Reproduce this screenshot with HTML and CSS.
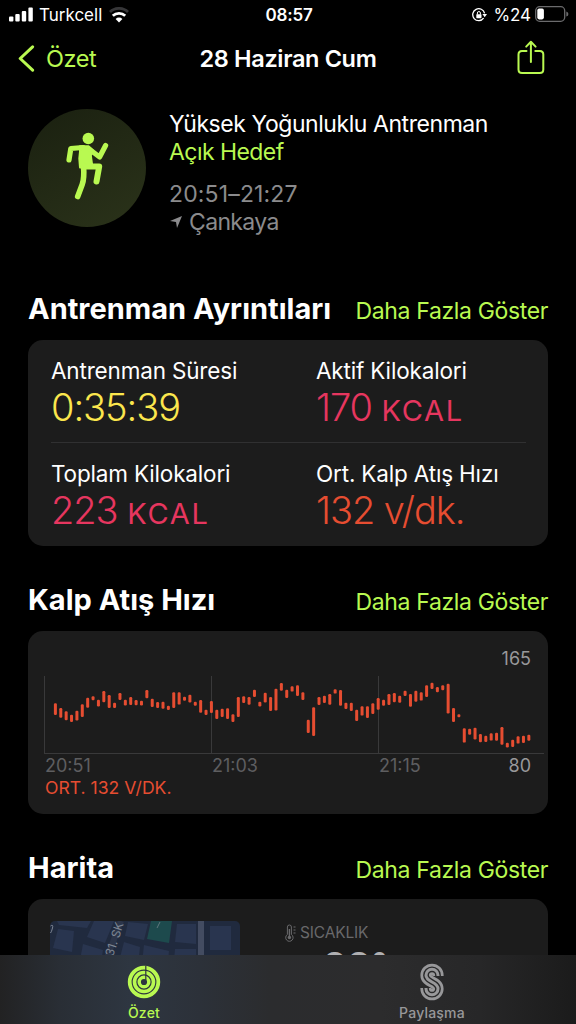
FILE: index.html
```
<!DOCTYPE html>
<html lang="tr">
<head>
    <meta charset="UTF-8">
    <meta name="viewport" content="width=device-width, initial-scale=1.0">
    <title>28 Haziran Cum</title>
    <link rel="stylesheet" href="styles.css">
</head>
<body>
<div class="status-bar">
    <div class="status-left">
        <svg class="signal" width="24" height="15" viewBox="0 0 24 15" fill="#fff">
            <rect x="0" y="9.5" width="4.4" height="5" rx="1"/>
            <rect x="6.3" y="7" width="4.4" height="7.5" rx="1"/>
            <rect x="12.8" y="4" width="4.4" height="10.5" rx="1"/>
            <rect x="19.4" y="0.5" width="4.4" height="14" rx="1"/>
        </svg>
        <span class="carrier">Turkcell</span>
        <svg width="20" height="16" viewBox="0 0 20 16" fill="none">
            <path d="M1 5 A13 13 0 0 1 19 5" stroke="#363638" stroke-width="2.8"/>
            <path d="M3.8 8.8 A8.9 8.9 0 0 1 16.2 8.8" stroke="#fff" stroke-width="2.8"/>
            <path d="M10 15.4 L6.6 11.9 A4.9 4.9 0 0 1 13.4 11.9 Z" fill="#fff"/>
        </svg>
    </div>
    <span class="clock">08:57</span>
    <div class="status-right">
        <svg width="15" height="14" viewBox="0 0 15 14" fill="none">
            <path d="M11.6 10.2 A6 6 0 1 1 12.6 5.4" stroke="#fff" stroke-width="1.3"/>
            <path d="M10.4 6 H15 L12.7 9.2 Z" fill="#fff"/>
            <rect x="4.3" y="6.2" width="5.2" height="4" rx="0.6" fill="#fff"/>
            <path d="M5.4 6.5 V5 A1.5 1.5 0 0 1 8.4 5 V6.5" stroke="#fff" stroke-width="1"/>
        </svg>
        <span class="percent">%24</span>
        <svg class="battery" width="34" height="16" viewBox="0 0 34 16" fill="none">
            <rect x="0.7" y="0.7" width="29" height="14.6" rx="4" stroke="#6b6b6d" stroke-width="1.3"/>
            <rect x="2.3" y="2.6" width="6.6" height="10.8" rx="1.8" fill="#fff"/>
            <path d="M31.3 5.4 Q33.4 6 33.4 8 Q33.4 10 31.3 10.6 Z" fill="#6b6b6d"/>
        </svg>
    </div>
</div>

<header class="nav">
    <a class="back">
        <svg width="17" height="27" viewBox="0 0 17 27" fill="none">
            <path d="M14.6 1.8 L2.2 13.5 L14.6 25.2" stroke="#b9f951" stroke-width="3" stroke-linecap="round" stroke-linejoin="round"/>
        </svg>
        <span>Özet</span>
    </a>
    <h1>28 Haziran Cum</h1>
    <svg class="share" width="28" height="36" viewBox="0 0 28 36" fill="none" stroke="#b9f951" stroke-width="2" stroke-linecap="round" stroke-linejoin="round">
        <path d="M9.5 11 H5 Q1.5 11 1.5 14.5 V29.5 Q1.5 33 5 33 H22.8 Q26.3 33 26.3 29.5 V14.5 Q26.3 11 22.8 11 H18.3"/>
        <path d="M13.9 22 V2 M9.2 6.6 L13.9 1.8 L18.6 6.6"/>
    </svg>
</header>

<section class="summary">
    <div class="badge">
        <svg width="118" height="118" viewBox="0 0 118 118" fill="none" stroke="#b9f951" stroke-linecap="round" stroke-linejoin="round">
            <circle cx="60.3" cy="29.5" r="5.8" fill="#b9f951" stroke="none"/>
            <path d="M52 37.3 H60.5 L65 41.5 L62.8 46.5 L64.5 58.5 H52 L51.3 49.5 L52 42.5 Z" fill="#b9f951" stroke-width="2"/>
            <path d="M55 38.5 L42.8 39.5 L41 51" stroke-width="5.2"/>
            <path d="M61 40 L71.6 48 L77.6 36.5" stroke-width="5.2"/>
            <path d="M57 57.5 H71.2 L68.5 72.5" stroke-width="6"/>
            <path d="M55.5 56.5 Q56.5 69.5 54.2 75.5 L49.7 87.5" stroke-width="5.6"/>
        </svg>
    </div>
    <div class="summary-text">
        <div class="workout-name">Yüksek Yoğunluklu Antrenman</div>
        <div class="goal">Açık Hedef</div>
        <div class="time">20:51–21:27</div>
        <div class="place">
            <svg width="14" height="14" viewBox="0 0 14 14"><path d="M13 1 L8 13 L7 7 L1 6 Z" fill="#8b8b8d"/></svg>
            <span>Çankaya</span>
        </div>
    </div>
</section>

<section class="block">
    <div class="block-head">
        <h2>Antrenman Ayrıntıları</h2>
        <a class="more">Daha Fazla Göster</a>
    </div>
    <div class="card stats">
        <div class="stat-row">
            <div class="stat">
                <div class="label">Antrenman Süresi</div>
                <div class="value yellow">0:35:39</div>
            </div>
            <div class="stat">
                <div class="label">Aktif Kilokalori</div>
                <div class="value pink">170 <span class="unit">KCAL</span></div>
            </div>
        </div>
        <div class="stat-row">
            <div class="stat">
                <div class="label">Toplam Kilokalori</div>
                <div class="value pink">223 <span class="unit">KCAL</span></div>
            </div>
            <div class="stat">
                <div class="label">Ort. Kalp Atış Hızı</div>
                <div class="value orange">132 v/dk.</div>
            </div>
        </div>
    </div>
</section>

<section class="block">
    <div class="block-head">
        <h2>Kalp Atış Hızı</h2>
        <a class="more">Daha Fazla Göster</a>
    </div>
    <div class="card heart">
        <div class="max">165</div>
        <svg class="chart" id="chart" width="500" height="80" viewBox="0 0 500 80">
            <path d="M0.5 1 V78.5 M167.5 1 V78.5 M334.5 1 V78.5 M0 78.5 H500" stroke="#39393a" fill="none"/>
        </svg>
        <div class="axis">
            <span>20:51</span>
            <span>21:03</span>
            <span>21:15</span>
            <span class="min">80</span>
        </div>
        <div class="average">ORT. 132 V/DK.</div>
    </div>
</section>

<section class="block">
    <div class="block-head">
        <h2>Harita</h2>
        <a class="more">Daha Fazla Göster</a>
    </div>
    <div class="card map-card">
        <svg class="map" width="190" height="103" viewBox="0 0 190 103">
            <rect width="190" height="103" fill="#202a3e"/>
            <g fill="#29354f">
                <path d="M7 0 H41 L37 7 L9 4 Z"/>
                <path d="M8 8 L24 10 L22 31 L3 27 Z"/>
                <path d="M44 0 H64 L55 22 L37 16 Z"/>
                <path d="M33 23 L53 29 L48 60 H26 Z"/>
                <path d="M78 1 L98 3 L94 19 L75 15 Z"/>
                <path d="M74 21 L90 26 L86 60 H64 Z"/>
                <path d="M94 24 L119 30 L116 60 H90 Z"/>
                <path d="M127 3 H146 V23 L125 21 Z"/>
                <path d="M125 28 H146 V60 H122 Z"/>
                <path d="M160 5 H181 V29 H160 Z"/>
                <path d="M160 35 H188 V60 H160 Z"/>
            </g>
            <path d="M101 0 H122 L119 22 L97 18 Z" fill="#1d4a4d"/>
            <path d="M107 7 L110 1" stroke="#60777c"/>
            <rect x="148" y="0" width="6" height="103" fill="#434c61"/>
            <path d="M71 0 L55 42" stroke="#2c3549" stroke-width="6"/>
            <text class="street" transform="translate(63 36) rotate(-72)">31. SK</text>
            <path d="M0.5 5 Q3.5 3 2.5 7 T0.5 12" stroke="#7d8593" fill="none"/>
        </svg>
        <div class="weather">
            <div class="weather-label">
                <svg width="12" height="18" viewBox="0 0 12 18" fill="none" stroke="#69696b">
                    <path d="M2.4 10.5 V3 A2 2 0 0 1 6.4 3 V10.5 A3.7 3.7 0 1 1 2.4 10.5 Z"/>
                    <path d="M4.4 5 V13" stroke-width="1.4"/>
                    <circle cx="4.4" cy="13.5" r="1.7" fill="#69696b" stroke="none"/>
                    <path d="M8.5 3 H10.5 M8.5 6 H10.5 M8.5 9 H10.5"/>
                </svg>
                <span>SICAKLIK</span>
            </div>
            <div class="degree">28°</div>
        </div>
    </div>
</section>

<nav class="tab-bar">
    <a class="tab active">
        <svg width="36" height="38" viewBox="0 0 36 38" fill="none" stroke="#b9f951">
            <circle cx="18" cy="19" r="14.3" stroke-width="3.8"/>
            <circle cx="18" cy="19" r="9.5" stroke-width="3.6"/>
            <circle cx="18" cy="19" r="4.8" stroke-width="3.4"/>
            <path d="M19.8 3 V17" stroke="#2d343e" stroke-width="1.2"/>
        </svg>
        <span>Özet</span>
    </a>
    <a class="tab">
        <svg width="36" height="38" viewBox="0 0 36 38" fill="none" stroke="#98989a">
            <path d="M24 13 V12.3 A6 6 0 0 0 12 12.3 C12 19.5 24 18.5 24 25.7 A6 6 0 0 1 12 25.7 V25" stroke-width="11.2"/>
            <path d="M24 13 V12.3 A6 6 0 0 0 12 12.3 C12 19.5 24 18.5 24 25.7 A6 6 0 0 1 12 25.7 V25" stroke="#29292a" stroke-width="5.8"/>
            <path d="M24 13 V12.3 A6 6 0 0 0 12 12.3 C12 19.5 24 18.5 24 25.7 A6 6 0 0 1 12 25.7 V25" stroke-width="3"/>
        </svg>
        <span>Paylaşma</span>
    </a>
</nav>
<script src="chart.js"></script>
</body>
</html>
```
FILE: styles.css
```
* {
    box-sizing: border-box;
}
body {
    position: relative;
    width: 576px;
    height: 1024px;
    margin: 0;
    overflow: hidden;
    background-color: #000;
    color: #fff;
    font-family: Inter, "Liberation Sans", sans-serif;
    white-space: nowrap;
}
h1, h2 {
    margin: 0;
}
svg {
    display: block;
    flex-shrink: 0;
}
.status-bar {
    display: grid;
    grid-template-columns: 1fr auto 1fr;
    align-items: center;
    height: 29px;
    padding: 0 7px 0 9px;
}
.status-left, .status-right {
    display: flex;
    align-items: center;
}
.status-right {
    justify-content: flex-end;
}
.signal {
    margin-top: -1px;
}
.battery {
    margin-top: -2px;
}
.carrier {
    margin: 0 7px 0 6px;
    font-size: 17px;
}
.clock {
    font-size: 17px;
    font-weight: 600;
    letter-spacing: -0.2px;
}
.percent {
    margin: 0 4px 0 7px;
    font-size: 17px;
    letter-spacing: -0.1px;
}
.nav {
    display: grid;
    grid-template-columns: 1fr auto 1fr;
    align-items: center;
    height: 58px;
    padding: 0 18px;
}
.back {
    display: flex;
    align-items: center;
    gap: 11px;
    color: #b9f951;
    font-size: 23.5px;
    letter-spacing: -0.4px;
}
.nav h1 {
    font-size: 23.5px;
    font-weight: 600;
    letter-spacing: -0.35px;
}
.share {
    justify-self: end;
    margin-right: 13px;
}
.summary {
    display: flex;
    gap: 23px;
    height: 198px;
    padding: 22px 28px 0;
}
.badge {
    width: 118px;
    height: 118px;
    border-radius: 50%;
    background: linear-gradient(150deg, #1a2010, #2b331a);
}
.summary-text {
    padding-top: 1px;
    font-size: 23px;
    line-height: 28px;
    letter-spacing: -0.44px;
}
.goal {
    color: #b9f951;
    letter-spacing: -0.55px;
}
.time {
    margin-top: 14px;
    color: #8b8b8d;
    letter-spacing: 0.15px;
}
.place {
    display: flex;
    align-items: center;
    gap: 6px;
    color: #8b8b8d;
    letter-spacing: -0.65px;
}
.block {
    padding: 0 28px;
}
.block-head {
    display: flex;
    justify-content: space-between;
    align-items: baseline;
    height: 55px;
    padding-top: 5px;
}
.block-head h2 {
    font-size: 29px;
    font-weight: 700;
    line-height: 38px;
}
.more {
    color: #b9f951;
    font-size: 23px;
    letter-spacing: -0.36px;
}
.card {
    border-radius: 15px;
    background-color: #1c1c1c;
}
.stats {
    height: 206px;
    margin-bottom: 30px;
    padding: 0 22px 0 23px;
}
.stat-row {
    display: grid;
    grid-template-columns: 265px 1fr;
    height: 102px;
    padding-top: 17px;
}
.stat-row + .stat-row {
    border-top: 1px solid #303031;
}
.label {
    font-size: 22.5px;
    line-height: 28px;
    letter-spacing: -0.17px;
}
.value {
    font-size: 38px;
    font-weight: 350;
    line-height: 44px;
    letter-spacing: -1.05px;
}
.unit {
    font-size: 29px;
    font-weight: 400;
    letter-spacing: 1.7px;
}
.yellow {
    color: #fbe64d;
}
.pink {
    color: #e6365f;
}
.orange {
    color: #e64d31;
}
.heart {
    height: 183px;
    margin-bottom: 30px;
    padding: 17px 4px 0 16px;
    font-size: 18px;
    line-height: 22px;
}
.max {
    padding-right: 13px;
    color: #98989a;
    text-align: right;
}
.chart {
    margin-top: 5px;
}
.axis {
    display: grid;
    grid-template-columns: 167px 167px 80px 1fr;
    padding: 0 13px 0 1px;
    color: #5e5e60;
}
.min {
    color: #98989a;
    text-align: right;
}
.average {
    padding-left: 1px;
    color: #e64d31;
    font-size: 17.6px;
}
.map-card {
    display: flex;
    height: 125px;
    padding: 22px 22px 0;
}
.map {
    border-radius: 5px;
}
.street {
    fill: #7d8593;
    font-size: 12px;
}
.weather {
    padding: 1px 0 0 45px;
}
.weather-label {
    display: flex;
    align-items: center;
    gap: 3px;
    color: #69696b;
    font-size: 15.5px;
    line-height: 22px;
    letter-spacing: -0.15px;
}
.degree {
    padding-left: 38px;
    color: #b0b0b2;
    font-size: 38px;
    font-weight: 600;
    line-height: 44px;
}
/* sits over the scrolled content */
.tab-bar {
    position: absolute;
    left: 0;
    bottom: 0;
    display: grid;
    grid-template-columns: 1fr 1fr;
    width: 576px;
    height: 69px;
    background: linear-gradient(90deg, #222223 0, #292e35 60px, #2e3641 130px, #2c3139 200px, #2b2c2e 270px, #2c2c2d 380px, #272728 480px, #1b1b1b 576px);
}
.tab {
    display: flex;
    flex-direction: column;
    align-items: center;
    padding-top: 8px;
    color: #98989a;
    font-size: 14px;
    font-weight: 500;
    line-height: 24px;
    letter-spacing: 0.2px;
}
.tab.active {
    color: #b9f951;
}
```
FILE: chart.js
```
const chart = document.getElementById('chart');

// [top, height] of every heart rate range, in chart units
const ranges = [
    [28.3, 11.7], [33, 9.7], [36.3, 9], [39.7, 7.3], [35.7, 9.7], [29.3, 12.7], [22.7, 10], [21.3, 4],
    [24.7, 6.7], [16, 11.3], [20, 13], [27.7, 5.3], [18, 7], [24.7, 5.7], [22, 8], [25, 5.3],
    [25.7, 4.7], [15, 8.3], [23.7, 8.3], [27, 6], [26.7, 7], [30.7, 4.3], [17.3, 15.7], [17.3, 12.3],
    [21.7, 4], [19.7, 7.7], [26.7, 4], [25, 12.7], [34.7, 5.3], [26, 12], [34.7, 9.3], [33.7, 8.3],
    [33.3, 10.7], [39.3, 7.7], [22, 20], [21.3, 6.7], [22, 7.7], [14.7, 7.3], [26.7, 4.7], [17.7, 9.7],
    [22, 14], [13.7, 21.7], [8, 7.7], [14.7, 8.3], [11.3, 5.3], [10.3, 10.7], [17.3, 7.7], [44.7, 13.3],
    [32.3, 28.7], [22, 8], [20.7, 7.3], [19, 10.7], [14.3, 4.3], [15, 15.7], [27.7, 6.3], [27.7, 8.3],
    [34.7, 11.3], [31.3, 9.3], [31.3, 11.7], [28.3, 10.7], [23, 11.7], [24.7, 6], [19, 11], [18, 9.3],
    [20.7, 7], [15.7, 5.3], [19, 12.7], [15.7, 11], [17.3, 8.3], [10.3, 11.7], [7.7, 6.3], [12, 5.3],
    [10.3, 5], [8.7, 29.7], [33, 14], [39.3, 3], [53.3, 14.3], [53.7, 6], [52.7, 11.7], [59, 8.3],
    [60.7, 6.3], [58.3, 7.3], [57.7, 8], [52, 17.7], [67.7, 4.7], [64.7, 7.3], [61.3, 7.3], [60.7, 7.3],
    [59.7, 6]
];

ranges.forEach(([top, height], i) => {
    const bar = document.createElementNS('http://www.w3.org/2000/svg', 'rect');
    bar.setAttribute('x', 9.9 + i * 5.38);
    bar.setAttribute('y', top);
    bar.setAttribute('width', 3);
    bar.setAttribute('height', height);
    bar.setAttribute('rx', 1.2);
    bar.setAttribute('fill', '#e64d31');
    chart.appendChild(bar);
});
```
